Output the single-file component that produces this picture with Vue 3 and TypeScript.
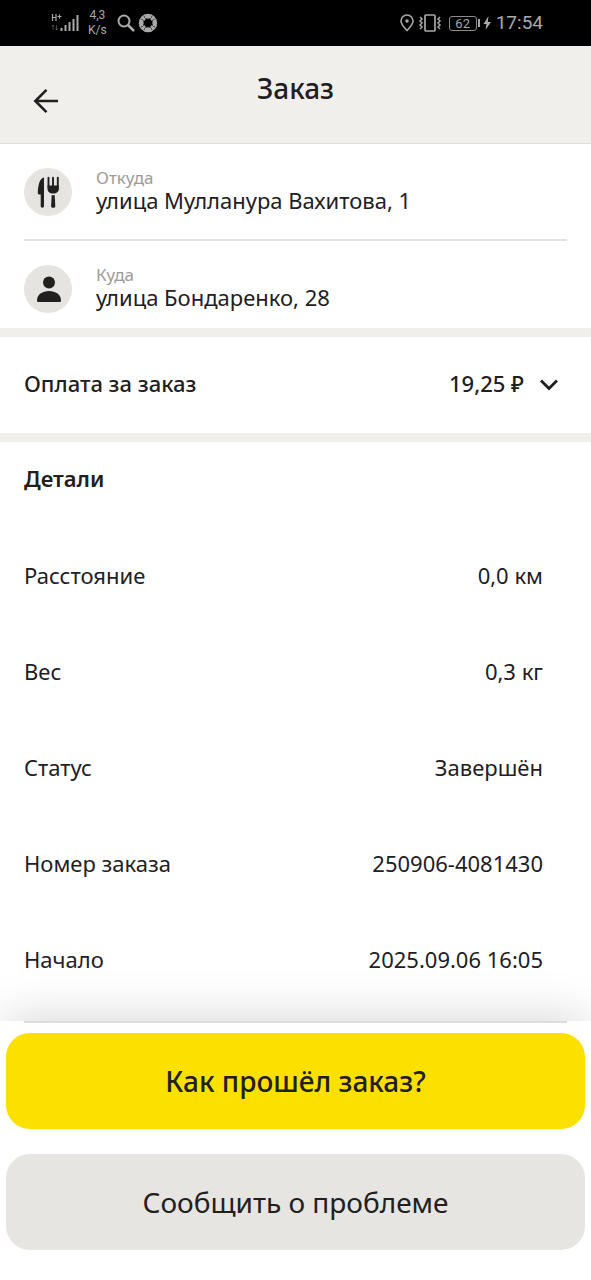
<script setup lang="ts">
interface Detail {
  label: string
  value: string
}

const details: Detail[] = [
  { label: 'Расстояние', value: '0,0 км' },
  { label: 'Вес', value: '0,3 кг' },
  { label: 'Статус', value: 'Завершён' },
  { label: 'Номер заказа', value: '250906-4081430' },
  { label: 'Начало', value: '2025.09.06 16:05' },
]
</script>

<template>
  <div class="screen">
    <div class="status">
      <div class="status-side">
        <svg class="signal" width="28" height="20" viewBox="0 0 28 20" fill="none" stroke="currentColor">
          <path d="M1.500 1v7M5 1v7M1.500 4.500H5M6.500 3.500h4M8.500 1.500v4" stroke-width="1.200" />
          <path d="M2 12v5M.8 13.500 2 12l1.200 1.500M5.500 12v5M4.300 15.500l1.200 1.500 1.200-1.500" opacity=".4" />
          <path d="M10.500 18v-3M14.500 18v-6M18.500 18V9M22.500 18V6M26.500 18V2" stroke-width="2" />
        </svg>
        <div class="speed"><span>4,3</span><span>K/s</span></div>
        <svg class="search" width="18" height="18" viewBox="0 0 18 18" fill="none" stroke="currentColor">
          <circle cx="7" cy="7" r="5.500" stroke-width="2" />
          <path d="m11 11 6 6" stroke-width="2.600" />
        </svg>
        <svg class="ball" width="20" height="20" viewBox="0 0 20 20">
          <circle cx="10" cy="10" r="8.500" fill="none" stroke="currentColor" stroke-width="1.400" />
          <path d="M6 1.800h8L13 5q-3 1.500-6 0zM6 18.200h8L13 15q-3-1.500-6 0zM1.800 6v8L5 13q1.500-3 0-6zM18.200 6v8L15 13q-1.500-3 0-6z" fill="currentColor" />
          <path d="m4 4 3 3M16 4l-3 3M4 16l3-3M16 16l-3-3" stroke="currentColor" stroke-width="2.600" />
        </svg>
      </div>
      <div class="status-side">
        <svg width="14" height="18" viewBox="0 0 14 18" fill="none" stroke="currentColor">
          <path d="M7 16.500C4.500 13.600 1 10.500 1 7a6 6 0 0 1 12 0c0 3.500-3.500 6.600-6 9.500z" stroke-width="1.600" />
          <circle cx="7" cy="7" r="1.800" fill="currentColor" stroke="none" />
        </svg>
        <svg class="vibrate" width="24" height="18" viewBox="0 0 24 18" fill="none" stroke="currentColor">
          <rect x="7" y="1" width="10" height="16" rx="1" stroke-width="1.700" />
          <path d="m2 3 2 2-2 2 2 2-2 2 2 2-2 2M22 3l-2 2 2 2-2 2 2 2-2 2 2 2" stroke-width="1.500" />
        </svg>
        <span class="battery">62</span>
        <svg class="charge" width="14" height="16" viewBox="0 0 14 16" fill="currentColor">
          <path d="M0 4h2v8H0zM10.500 1 5.500 9h3l-1 6 5.500-8h-3.200z" />
        </svg>
        <span class="clock">17:54</span>
      </div>
    </div>

    <header class="header">
      <button class="back" type="button" aria-label="Назад">
        <svg width="26" height="26" viewBox="0 0 26 26" fill="none" stroke="currentColor" stroke-width="2.600">
          <path d="M25 13H2.500M13.500 1.800 2.300 13l11.200 11.200" />
        </svg>
      </button>
      <h1>Заказ</h1>
    </header>

    <main>
      <section class="route">
        <div class="stop">
          <svg class="avatar" width="48" height="48" viewBox="0 0 48 48">
            <circle cx="24" cy="24" r="24" fill="#e5e4e0" />
            <path d="M20 9.500v28.500c0 1.200-.7 1.700-1.700 1.700s-1.600-.5-1.600-1.700V26.500h-1.500c-.9 0-1.400-.6-1.400-1.500C14 18 15.500 10 20 9.500z" fill="#21201f" />
            <path d="M24.500 9.700V19M29 9.700V19M33.800 9.700V19" stroke="#21201f" stroke-width="1.900" stroke-linecap="round" />
            <path d="M23.500 17.500h11.400v3c0 3.200-2.200 5-5.700 5s-5.700-1.800-5.700-5zM27.700 27c1 .3 2 .3 3 0l.6 11.200c0 2-4.200 2-4.200 0z" fill="#21201f" />
          </svg>
          <div>
            <p class="caption">Откуда</p>
            <p class="address">улица Мулланура Вахитова, 1</p>
          </div>
        </div>
        <div class="stop">
          <svg class="avatar" width="48" height="48" viewBox="0 0 48 48">
            <circle cx="24" cy="24" r="24" fill="#e5e4e0" />
            <circle cx="25" cy="17.500" r="6" fill="#21201f" />
            <path d="M13 35.500c0-6 5.500-9.500 12-9.500s12 3.500 12 9.500c0 1-.5 1.500-1.500 1.500h-21c-1 0-1.500-.5-1.500-1.500z" fill="#21201f" />
          </svg>
          <div>
            <p class="caption">Куда</p>
            <p class="address">улица Бондаренко, 28</p>
          </div>
        </div>
      </section>

      <button class="payment" type="button" aria-expanded="false">
        <span>Оплата за заказ</span>
        <span class="sum">19,25 ₽</span>
        <svg width="18" height="12" viewBox="0 0 18 12" fill="none" stroke="currentColor" stroke-width="2.800">
          <path d="m1 1.500 8 8 8-8" />
        </svg>
      </button>

      <section class="details">
        <h2>Детали</h2>
        <dl>
          <div v-for="item in details" :key="item.label" class="detail">
            <dt>{{ item.label }}</dt>
            <dd>{{ item.value }}</dd>
          </div>
        </dl>
      </section>
    </main>

    <footer class="actions">
      <button class="action primary" type="button">Как прошёл заказ?</button>
      <button class="action" type="button">Сообщить о проблеме</button>
    </footer>
  </div>
</template>

<style>
body {
  margin: 0;
  background: #fff;
}
</style>

<style scoped>
* {
  box-sizing: border-box;
}

.screen {
  display: flex;
  flex-direction: column;
  min-height: 100vh;
  background: #fff;
  color: #21201f;
  font-family: "Noto Sans", "Open Sans", sans-serif;
  font-size: 22px;
  line-height: 28px;
}

h1,
h2,
p,
dl,
dd {
  margin: 0;
}

button {
  border: 0;
  padding: 0;
  background: none;
  color: inherit;
  font: inherit;
  cursor: pointer;
}

.status {
  display: flex;
  justify-content: space-between;
  align-items: center;
  height: 46px;
  padding: 0 48px 0 51px;
  background: #000;
  color: #a9a9a9;
  font-family: Roboto, sans-serif;
}

.status-side {
  display: flex;
  align-items: center;
}

.speed {
  display: flex;
  flex-direction: column;
  align-items: center;
  margin-left: 9px;
  font-size: 12px;
  line-height: 15px;
}

.search {
  margin-left: 10px;
}

.ball {
  margin-left: 3px;
}

.vibrate {
  margin-left: 4px;
}

.battery {
  width: 28px;
  margin-left: 7px;
  border: 1px solid #8a8a8a;
  border-radius: 3px;
  font-size: 13px;
  line-height: 13px;
  text-align: center;
}

.charge {
  margin-left: 1px;
}

.clock {
  margin-left: 4px;
  font-size: 19px;
}

.header {
  display: grid;
  grid-template-columns: 64px 1fr 64px;
  height: 98px;
  border-bottom: 1px solid #dededb;
  background: #f1efec;
}

.back {
  display: flex;
  align-items: center;
  padding: 12px 0 0 33px;
}

h1 {
  padding-top: 24px;
  font-size: 28px;
  font-weight: 500;
  line-height: 36px;
  text-align: center;
}

.route {
  padding: 0 24px;
}

.stop {
  display: flex;
  align-items: flex-start;
  gap: 24px;
  padding: 24px 0 15px;
}

.stop:first-child {
  padding-bottom: 23px;
  border-bottom: 2px solid #e2e2e0;
}

.avatar {
  flex: none;
}

.caption {
  color: #9e9b98;
  font-size: 17px;
  line-height: 20px;
}

.address {
  line-height: 24px;
}

.payment {
  display: flex;
  align-items: center;
  width: 100%;
  height: 114px;
  padding: 0 33px 0 24px;
  border: solid #f1efec;
  border-width: 9px 0;
  font-weight: 500;
  text-align: left;
}

.payment span {
  padding-bottom: 4px;
}

.sum {
  margin-left: auto;
  margin-right: 16px;
}

.details {
  padding: 0 24px;
}

h2 {
  padding: 22px 0 35px;
  font-size: 22px;
  font-weight: 600;
}

dl {
  padding-bottom: 12px;
}

.detail {
  display: flex;
  justify-content: space-between;
  align-items: center;
  gap: 24px;
  min-height: 96px;
  padding-right: 24px;
}

.actions {
  position: sticky;
  bottom: 0;
  display: flex;
  flex-direction: column;
  gap: 25px;
  margin-top: auto;
  padding: 0 6px 30px;
  background: #fff;
  box-shadow: 0 -4px 48px -4px rgba(0, 0, 0, 0.18);
}

.actions::before {
  content: "";
  height: 2px;
  margin: 0 18px -15px;
  background: #dddddc;
}

.action {
  height: 96px;
  border-radius: 24px;
  background: #e6e5e1;
  font-size: 28px;
  line-height: 36px;
}

.primary {
  background: #fce000;
  font-weight: 500;
}
</style>
